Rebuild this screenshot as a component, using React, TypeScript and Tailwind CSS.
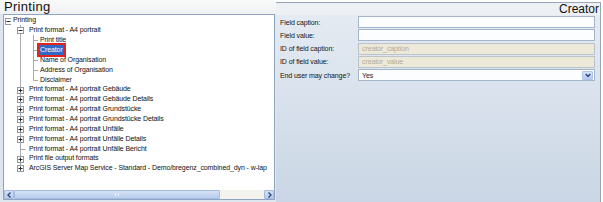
import React from "react";

type Row = {
  label: string;
  level: number;
  box?: "+" | "-";
  last?: boolean;
  selected?: boolean;
};

const rows: Row[] = [
  { label: "Printing", level: 0, box: "-" },
  { label: "Print format - A4 portrait", level: 1, box: "-" },
  { label: "Print title", level: 2 },
  { label: "Creator", level: 2, selected: true },
  { label: "Name of Organisation", level: 2 },
  { label: "Address of Organisation", level: 2 },
  { label: "Disclaimer", level: 2, last: true },
  { label: "Print format - A4 portrait Gebäude", level: 1, box: "+" },
  { label: "Print format - A4 portrait Gebäude Details", level: 1, box: "+" },
  { label: "Print format - A4 portrait Grundstücke", level: 1, box: "+" },
  { label: "Print format - A4 portrait Grundstücke Details", level: 1, box: "+" },
  { label: "Print format - A4 portrait Unfälle", level: 1, box: "+" },
  { label: "Print format - A4 portrait Unfälle Details", level: 1, box: "+" },
  { label: "Print format - A4 portrait Unfälle Bericht", level: 1 },
  { label: "Print file output formats", level: 1, box: "+" },
  { label: "ArcGIS Server Map Service - Standard - Demo/bregenz_combined_dyn - w-lap", level: 1, box: "+", last: true },
];

const H = 9.87;
const MID = 5.5;
const COL = [4.5, 16.5, 29.5];
const WIDTH = [7, 23, 34];

function Expander({ cx, sign }: { cx: number; sign: "+" | "-" }) {
  return (
    <g>
      <rect x={cx - 3} y={MID - 3} width={6} height={6} fill="#fbfbfb" stroke="#8c99a6" strokeWidth={1} />
      <line x1={cx - 2} y1={MID} x2={cx + 2} y2={MID} stroke="#2a2a2a" strokeWidth={1} />
      {sign === "+" && <line x1={cx} y1={MID - 2} x2={cx} y2={MID + 2} stroke="#2a2a2a" strokeWidth={1} />}
    </g>
  );
}

function TreeLines({ row }: { row: Row }) {
  const line = "#a9a9a9";
  const c = COL[row.level];
  return (
    <svg width={WIDTH[row.level]} height={H} className="shrink-0">
      {row.level === 2 && <line x1={COL[1]} y1={0} x2={COL[1]} y2={H} stroke={line} />}
      {row.level > 0 && <line x1={c} y1={0} x2={c} y2={row.last ? MID : H} stroke={line} />}
      {row.box ? (
        <Expander cx={c} sign={row.box} />
      ) : (
        <line x1={c} y1={MID} x2={c + 5} y2={MID} stroke={line} />
      )}
    </svg>
  );
}

function Arrow({ dir }: { dir: "left" | "right" }) {
  return (
    <div className="w-[10px] h-full bg-gradient-to-b from-[#d3e0f5] to-[#b8ccee] border border-[#a3bbe0] rounded-[1px] flex items-center justify-center">
      <svg width="5" height="6" viewBox="0 0 5 6">
        <path
          d={dir === "left" ? "M3.5 0.5 L1 3 L3.5 5.5" : "M1.5 0.5 L4 3 L1.5 5.5"}
          fill="none"
          stroke="#2f4b7c"
          strokeWidth="1.4"
        />
      </svg>
    </div>
  );
}

function Field({ label, value, readOnly, select }: { label: string; value?: string; readOnly?: boolean; select?: boolean }) {
  return (
    <div className="flex items-center h-[12px]">
      <div className="w-[82px] pl-[4px] text-[7px] tracking-[-0.1px] text-[#151515] leading-none">{label}</div>
      <div
        className={`w-[237px] h-[12px] border flex items-center pl-[3px] text-[7px] tracking-[-0.1px] leading-none ${
          readOnly ? "bg-[#ece9d8] border-[#bcc3cc] text-[#b4ac9b]" : "bg-[#fcfdfe] border-[#a4b4c9] text-[#1c1c1c]"
        }`}
      >
        <span className="flex-1">{value}</span>
        {select && (
          <div className="w-[11px] h-[9px] mr-[1px] bg-gradient-to-b from-[#d6e2f8] to-[#b6c9ef] border border-[#b0c3e8] rounded-[1px] flex items-center justify-center">
            <svg width="6" height="5" viewBox="0 0 6 5">
              <path d="M0.8 1 L3 3.4 L5.2 1" fill="none" stroke="#2e4476" strokeWidth="1.5" />
            </svg>
          </div>
        )}
      </div>
    </div>
  );
}

export default function App() {
  return (
    <div className="w-[603px] h-[202px] bg-white flex font-['Liberation_Sans',Arial,sans-serif] overflow-hidden">
      {/* Left: tree */}
      <div className="w-[276px] h-full flex flex-col bg-[#dde5ef]">
        <div className="h-[14px] bg-gradient-to-b from-[#fafafa] to-[#eef0f3] pl-[4px] text-[13px] leading-[14px] text-[#111] tracking-[0.3px]">
          Printing
        </div>
        <div className="ml-[3px] w-[272px] h-[186px] bg-white border border-[#8ea4c1] flex flex-col">
          <div className="flex-1 pt-[0.5px] overflow-hidden">
            {rows.map((row, i) => (
              <div key={i} className="flex items-center" style={{ height: H }}>
                <TreeLines row={row} />
                {row.selected ? (
                  <span className="ml-[0.5px] h-[10px] px-[1.5px] bg-[#3169c6] text-white text-[7px] leading-[10px] tracking-[-0.1px] outline-2 outline-[#e3231f] whitespace-nowrap">
                    {row.label}
                  </span>
                ) : (
                  <span className="ml-[0.5px] px-[1.5px] text-[#111] text-[7px] leading-[10px] tracking-[-0.1px] whitespace-nowrap">
                    {row.label}
                  </span>
                )}
              </div>
            ))}
          </div>
          <div className="h-[9px] flex items-stretch bg-[#f3f2ec]">
            <Arrow dir="left" />
            <div className="w-[206px] h-full bg-gradient-to-b from-[#d4e1f6] to-[#b9cdef] border border-[#a5bce0] rounded-[1px] flex items-center justify-center">
              <div className="w-[4px] h-[3px] border-x border-[#eef3fb]" />
            </div>
            <div className="flex-1" />
            <Arrow dir="right" />
          </div>
        </div>
      </div>

      {/* Right: properties */}
      <div className="w-[325px] h-[200px] mt-[2px] border-t border-r border-[#9aa6b6] bg-gradient-to-b from-[#e6ecf3] via-[#d8e1ec] to-[#cad6e5] flex flex-col">
        <div className="h-[12px] pr-[1px] text-right text-[12px] leading-[13px] text-[#111] bg-[#edf0f4]">
          Creator
        </div>
        <div className="mt-[1px] flex flex-col gap-[1.3px]">
          <Field label="Field caption:" />
          <Field label="Field value:" />
          <Field label="ID of field caption:" value="creator_caption" readOnly />
          <Field label="ID of field value:" value="creator_value" readOnly />
          <Field label="End user may change?" value="Yes" select />
        </div>
      </div>
    </div>
  );
}
